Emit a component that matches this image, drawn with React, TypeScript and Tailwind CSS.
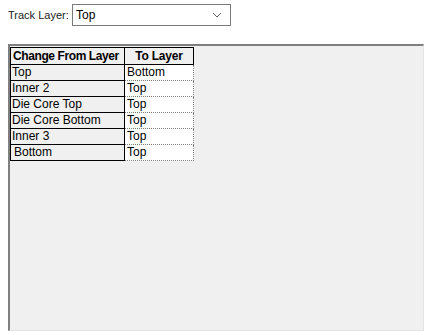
const rows: [string, string][] = [
  ["Top", "Bottom"],
  ["Inner 2", "Top"],
  ["Die Core Top", "Top"],
  ["Die Core Bottom", "Top"],
  ["Inner 3", "Top"],
  ["Bottom", "Top"],
];

export default function App() {
  return (
    <div
      className="w-[430px] h-[335px] bg-white text-[12px] text-black relative"
      style={{ fontFamily: '"Liberation Sans", Arial, sans-serif' }}
    >
      {/* Track layer selector */}
      <div className="flex items-center pt-[4px] pl-[8px]">
        <span className="w-[64px] text-[11px] text-[#1a1a1a] whitespace-nowrap">Track Layer:</span>
        <div className="w-[159px] h-[22px] border border-[#7a7a7a] bg-white flex items-center justify-between pl-[3px] pr-[8px]">
          <span>Top</span>
          <svg width="10" height="6" viewBox="0 0 10 6" fill="none">
            <path d="M1 1 L5 5 L9 1" stroke="#606060" strokeWidth="1" />
          </svg>
        </div>
      </div>

      {/* Grid panel */}
      <div className="mt-[18px] ml-[8px] w-[416px] h-[287px] bg-[#f0f0f0] border-t-2 border-l-2 border-t-[#7f7f7f] border-l-[#7f7f7f] border-r border-b border-r-[#e3e3e3] border-b-[#e3e3e3] pt-[1px] pl-[0px]">
        <div className="flex flex-col w-[184px]">
          <div className="flex h-[18px] font-bold whitespace-nowrap">
            <div className="w-[115px] border border-black bg-[#f0f0f0] pl-[2px] leading-[16px] tracking-[-0.4px] overflow-hidden">
              Change From Layer
            </div>
            <div className="w-[69px] border border-l-0 border-black bg-[#f0f0f0] text-center leading-[16px] tracking-[-0.2px]">
              To Layer
            </div>
          </div>
          {rows.map(([from, to], i) => (
            <div key={from} className="flex h-[16px] whitespace-nowrap">
              <div
                className={`w-[115px] border border-t-0 border-black bg-[#f0f0f0] leading-[15px] ${
                  i === rows.length - 1 ? "pl-[3px]" : "pl-[1px]"
                }`}
              >
                {from}
              </div>
              <div className="w-[69px] border-r border-b border-dotted border-[#7f7f7f] bg-white pl-[2px] leading-[15px]">
                {to}
              </div>
            </div>
          ))}
        </div>
      </div>
    </div>
  );
}
